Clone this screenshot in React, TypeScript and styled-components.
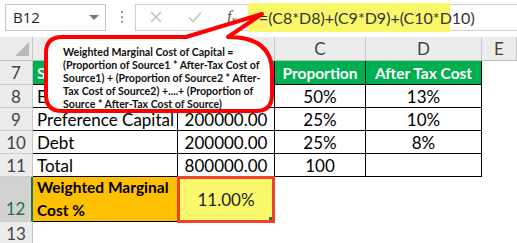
import { Fragment } from 'react'
import styled, { createGlobalStyle } from 'styled-components'

const GlobalStyle = createGlobalStyle`
  html, body {
    margin: 0;
    padding: 0;
    background: #ffffff;
  }
  * {
    box-sizing: border-box;
  }
`

const columns = ['', '', 'C', 'D', 'E']

type Row = {
  label: string
  cells: { text?: string; kind?: 'head' | 'data' | 'plain'; align?: 'left' | 'center' }[]
}

const rows: Row[] = [
  {
    label: '7',
    cells: [
      { text: 'Source', kind: 'head', align: 'left' },
      { text: 'Amount', kind: 'head' },
      { text: 'Proportion', kind: 'head' },
      { text: 'After Tax Cost', kind: 'head' },
      { kind: 'plain' },
    ],
  },
  {
    label: '8',
    cells: [
      { text: 'Equity', kind: 'data', align: 'left' },
      { text: '400000.00', kind: 'data' },
      { text: '50%', kind: 'data' },
      { text: '13%', kind: 'data' },
      { kind: 'plain' },
    ],
  },
  {
    label: '9',
    cells: [
      { text: 'Preference Capital', kind: 'data', align: 'left' },
      { text: '200000.00', kind: 'data' },
      { text: '25%', kind: 'data' },
      { text: '10%', kind: 'data' },
      { kind: 'plain' },
    ],
  },
  {
    label: '10',
    cells: [
      { text: 'Debt', kind: 'data', align: 'left' },
      { text: '200000.00', kind: 'data' },
      { text: '25%', kind: 'data' },
      { text: '8%', kind: 'data' },
      { kind: 'plain' },
    ],
  },
  {
    label: '11',
    cells: [
      { text: 'Total', kind: 'data', align: 'left' },
      { text: '800000.00', kind: 'data' },
      { text: '100', kind: 'data' },
      { text: '', kind: 'data' },
      { kind: 'plain' },
    ],
  },
]

export default function App() {
  return (
    <Page>
      <GlobalStyle />
      <FormulaBar>
        <NameBox>
          <span>B12</span>
          <Caret />
        </NameBox>
        <Dots>
          <i />
          <i />
          <i />
        </Dots>
        <FormulaBox>
          <FxButtons>
            <svg width="14" height="14" viewBox="0 0 14 14">
              <path d="M2 2 L12 12 M12 2 L2 12" stroke="#c4c4c4" strokeWidth="1.6" fill="none" />
            </svg>
            <svg width="16" height="14" viewBox="0 0 16 14">
              <path d="M2 7.5 L6 11.5 L14 2.5" stroke="#c4c4c4" strokeWidth="1.6" fill="none" />
            </svg>
            <Fx>
              f<sub>x</sub>
            </Fx>
          </FxButtons>
          <FormulaInput>
            <Highlight>=(C8*D8)+(C9*D9)+(C10*D10)</Highlight>
          </FormulaInput>
        </FormulaBox>
      </FormulaBar>

      <Sheet>
        <Corner>
          <svg width="16" height="16" viewBox="0 0 16 16">
            <path d="M15 1 L15 15 L1 15 Z" fill="#b9b9b9" />
          </svg>
        </Corner>
        {columns.map((c, i) => (
          <ColHead key={i}>{c}</ColHead>
        ))}

        {rows.map((r) => (
          <Fragment key={r.label}>
            <RowHead>{r.label}</RowHead>
            {r.cells.map((cell, i) => (
              <Cell key={i} $kind={cell.kind ?? 'plain'} $align={cell.align ?? 'center'}>
                {cell.text}
              </Cell>
            ))}
          </Fragment>
        ))}

        <RowHead $active $tall>
          12
        </RowHead>
        <LabelCell>
          <span>Weighted Marginal</span>
          <span>Cost %</span>
        </LabelCell>
        <ResultCell>
          11.00%
          <FillHandle />
        </ResultCell>
        <Blank />
        <Blank />
        <Blank />

        <RowHead>13</RowHead>
        <Blank />
        <Blank />
        <Blank />
        <Blank />
        <Blank />
      </Sheet>

      <Callout>
        <svg width="517" height="243" viewBox="0 0 517 243">
          <path
            d="M62 37 L186 37 L262 14 L228 37 Q272 37 272 72 L272 95 Q272 111 256 111 L62 111 Q46 111 46 95 L46 53 Q46 37 62 37 Z"
            fill="#ffffff"
            stroke="#ff0000"
            strokeWidth="4"
            strokeLinejoin="round"
          />
        </svg>
        <CalloutText>
          Weighted Marginal Cost of Capital =
          <br />
          (Proportion of Source1 * After-Tax Cost of
          <br />
          Source1) + (Proportion of Source2 * After-
          <br />
          Tax Cost of Source2) +....+ (Proportion of
          <br />
          Source * After-Tax Cost of Source)
        </CalloutText>
      </Callout>
    </Page>
  )
}

const Page = styled.div`
  position: relative;
  width: 517px;
  height: 243px;
  overflow: hidden;
  background: #ffffff;
  font-family: Lato, 'Liberation Sans', sans-serif;
`

const FormulaBar = styled.div`
  display: flex;
  align-items: center;
  height: 37px;
  padding: 0 0 3px 5px;
`

const NameBox = styled.div`
  display: flex;
  align-items: center;
  justify-content: space-between;
  width: 101px;
  height: 27px;
  padding: 0 6px 0 7px;
  border: 1px solid #c6c6c6;
  background: #ffffff;
  font-family: 'Open Sans', 'Liberation Sans', sans-serif;
  font-size: 15px;
  color: #222222;
`

const Caret = styled.span`
  width: 0;
  height: 0;
  border-left: 5px solid transparent;
  border-right: 5px solid transparent;
  border-top: 5px solid #777777;
`

const Dots = styled.div`
  display: flex;
  flex-direction: column;
  gap: 3px;
  margin: 0 12px 0 15px;

  i {
    width: 2px;
    height: 2px;
    background: #9a9a9a;
  }
`

const FormulaBox = styled.div`
  display: flex;
  flex: 1;
  height: 27px;
  border: 1px solid #d0d0d0;
  border-right: none;
`

const FxButtons = styled.div`
  display: flex;
  align-items: center;
  width: 112px;
  padding-left: 13px;
  gap: 24px;
`

const Fx = styled.span`
  font-family: 'Liberation Serif', serif;
  font-style: italic;
  font-size: 16px;
  color: #555555;

  sub {
    font-size: 11px;
    vertical-align: -1px;
  }
`

const FormulaInput = styled.div`
  flex: 1;
  display: flex;
  align-items: stretch;
`

const Highlight = styled.span`
  display: flex;
  align-items: center;
  width: 202px;
  margin: -2px 0;
  padding-left: 11px;
  background: #f8f86a;
  white-space: nowrap;
  font-size: 16px;
  color: #333333;
`

const Sheet = styled.div`
  display: grid;
  grid-template-columns: 33px 145px 97px 91px 116px 1fr;
  grid-template-rows: 24px 24px 23px 23px 23px 23px 45px 23px;
`

const Corner = styled.div`
  display: flex;
  align-items: flex-end;
  justify-content: flex-end;
  padding: 0 2px 3px 0;
  background: #ececec;
  border-right: 1px solid #c6c6c6;
  border-bottom: 1px solid #bdbdbd;
`

const ColHead = styled.div`
  display: flex;
  align-items: center;
  justify-content: center;
  background: #ececec;
  border-right: 1px solid #c6c6c6;
  border-bottom: 1px solid #bdbdbd;
  font-size: 17px;
  color: #444444;
`

const RowHead = styled.div<{ $active?: boolean; $tall?: boolean }>`
  display: flex;
  align-items: ${(p) => (p.$tall ? 'flex-end' : 'center')};
  justify-content: center;
  padding-bottom: ${(p) => (p.$tall ? '2px' : '0')};
  background: ${(p) => (p.$active ? '#d2d2d2' : '#ececec')};
  border-right: ${(p) => (p.$active ? '2px solid #217346' : '1px solid #c6c6c6')};
  border-bottom: 1px solid #cfcfcf;
  font-size: 17px;
  color: ${(p) => (p.$active ? '#217346' : '#444444')};
`

const Cell = styled.div<{ $kind: 'head' | 'data' | 'plain'; $align: 'left' | 'center' }>`
  display: flex;
  align-items: center;
  justify-content: ${(p) => (p.$align === 'left' ? 'flex-start' : 'center')};
  padding: 0 4px;
  white-space: nowrap;
  overflow: hidden;
  font-size: ${(p) => (p.$kind === 'head' ? '15.5px' : '17px')};
  font-weight: ${(p) => (p.$kind === 'head' ? 700 : 400)};
  color: ${(p) => (p.$kind === 'head' ? '#ffffff' : '#000000')};
  background: ${(p) => (p.$kind === 'head' ? '#00b050' : '#ffffff')};
  border-right: ${(p) => (p.$kind === 'plain' ? 'none' : '1px solid #000000')};
  border-bottom: ${(p) => (p.$kind === 'plain' ? 'none' : '1px solid #000000')};
`

const LabelCell = styled.div`
  display: flex;
  flex-direction: column;
  justify-content: center;
  padding: 0 4px;
  background: #ffc000;
  border-bottom: 1px solid #000000;
  white-space: nowrap;
  font-size: 15.5px;
  font-weight: 700;
  line-height: 23px;
  color: #000000;
`

const ResultCell = styled.div`
  position: relative;
  display: flex;
  align-items: center;
  justify-content: center;
  margin: -1px 0 -1px -1px;
  background: #f9f96b;
  border: 3px solid #f0402e;
  font-size: 17px;
  color: #222222;
`

const FillHandle = styled.span`
  position: absolute;
  right: 0;
  bottom: 0;
  width: 3px;
  height: 3px;
  background: #217346;
`

const Blank = styled.div`
  background: #ffffff;
`

const Callout = styled.div`
  position: absolute;
  inset: 0;
  pointer-events: none;

  svg {
    position: absolute;
    left: 0;
    top: 0;
  }
`

const CalloutText = styled.div`
  position: absolute;
  left: 63px;
  top: 46px;
  font-size: 10.6px;
  font-weight: 700;
  line-height: 13px;
  color: #111111;
`
